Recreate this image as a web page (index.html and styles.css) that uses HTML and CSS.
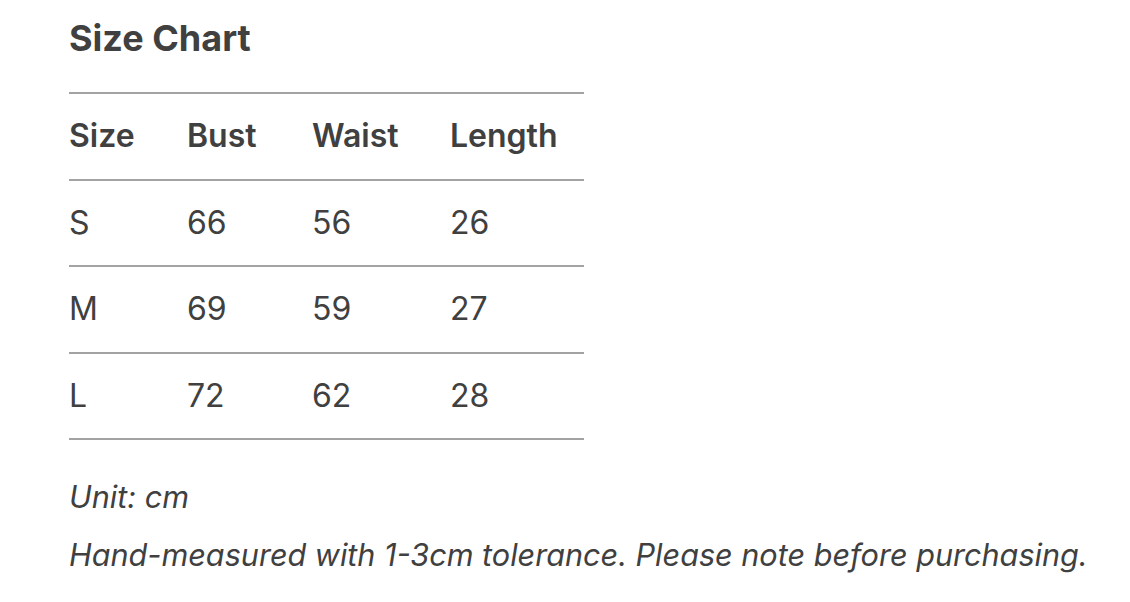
FILE: index.html
```html
<!DOCTYPE html>
<html lang="en">
<head>
<meta charset="utf-8">
<title>Size Chart</title>
<link rel="stylesheet" href="styles.css">
</head>
<body>
<main class="page">
  <h2 class="title">Size Chart</h2>
  <table class="chart">
    <thead>
      <tr><th>Size</th><th>Bust</th><th>Waist</th><th>Length</th></tr>
    </thead>
    <tbody>
      <tr><td>S</td><td>66</td><td>56</td><td>26</td></tr>
      <tr><td>M</td><td>69</td><td>59</td><td>27</td></tr>
      <tr><td>L</td><td>72</td><td>62</td><td>28</td></tr>
    </tbody>
  </table>
  <p class="note">Unit: cm</p>
  <p class="note">Hand-measured with 1-3cm tolerance. Please note before purchasing.</p>
</main>
</body>
</html>
```

FILE: styles.css
```css
html, body {
  margin: 0;
  padding: 0;
  background: #ffffff;
}

body {
  font-family: "Inter", "Liberation Sans", sans-serif;
  color: #404040;
}

.page {
  padding: 17px 20px 0 69px;
  display: flex;
  flex-direction: column;
  align-items: flex-start;
}

.title {
  margin: 0;
  font-size: 36px;
  font-weight: 700;
  line-height: 43px;
}

.chart {
  margin-top: 32px;
  width: 515px;
  border-collapse: collapse;
  border-top: 2px solid #a3a3a3;
}

.chart th,
.chart td {
  text-align: left;
  padding: 18.25px 0 18.25px 0;
  font-size: 32px;
  line-height: 48px;
  border-bottom: 2px solid #a3a3a3;
}

.chart th {
  font-weight: 600;
}

.chart td {
  font-weight: 400;
}

.chart th:nth-child(1) { width: 118px; }
.chart th:nth-child(2) { width: 125px; }
.chart th:nth-child(3) { width: 138px; }

.note {
  margin: 0;
  font-style: italic;
  font-size: 30.6px;
  line-height: 58px;
  white-space: nowrap;
}

.chart + .note {
  margin-top: 28px;
}
```
